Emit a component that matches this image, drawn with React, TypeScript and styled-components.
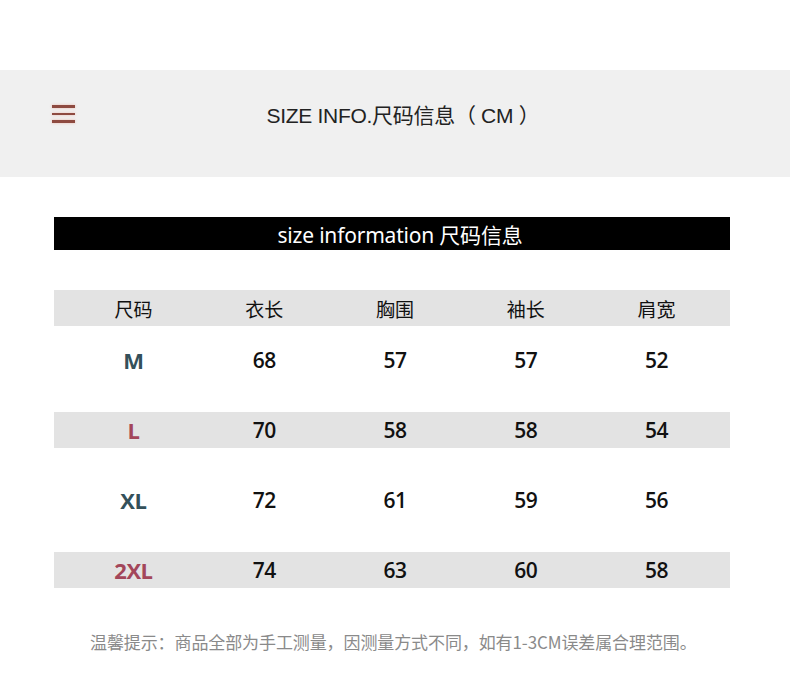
import { FC } from "react";
import styled, { createGlobalStyle } from "styled-components";

type TRow = {
  size: string;
  tone: "teal" | "rose";
  values: number[];
};

const headers = ["尺码", "衣长", "胸围", "袖长", "肩宽"];

const rows: TRow[] = [
  { size: "M", tone: "teal", values: [68, 57, 57, 52] },
  { size: "L", tone: "rose", values: [70, 58, 58, 54] },
  { size: "XL", tone: "teal", values: [72, 61, 59, 56] },
  { size: "2XL", tone: "rose", values: [74, 63, 60, 58] },
];

const App: FC = () => {
  return (
    <>
      <GlobalStyle />
      <Page>
        <TopBar>
          <MenuButton aria-label="menu">
            <span />
            <span />
            <span />
          </MenuButton>
          <h1 className="title">SIZE INFO.尺码信息（ CM ）</h1>
        </TopBar>
        <Content>
          <Banner>size information 尺码信息</Banner>
          <Table>
            <HeadRow>
              {headers.map((h) => (
                <Cell key={h}>{h}</Cell>
              ))}
            </HeadRow>
            {rows.map((row, i) => (
              <DataRow key={row.size} striped={i % 2 === 1}>
                <SizeCell tone={row.tone}>{row.size}</SizeCell>
                {row.values.map((v, j) => (
                  <NumCell key={j}>{v}</NumCell>
                ))}
              </DataRow>
            ))}
          </Table>
          <Note>温馨提示：商品全部为手工测量，因测量方式不同，如有1-3CM误差属合理范围。</Note>
        </Content>
      </Page>
    </>
  );
};

export default App;

const GlobalStyle = createGlobalStyle`
  html, body {
    margin: 0;
    padding: 0;
    background: #ffffff;
  }
  body {
    font-family: "Noto Sans", "Noto Sans CJK SC", sans-serif;
  }
`;

const Page = styled.div`
  width: 790px;
  height: 673px;
  display: flex;
  flex-direction: column;
  padding-top: 70px;
  box-sizing: border-box;
  overflow: hidden;
`;

const TopBar = styled.div`
  position: relative;
  height: 107px;
  background: #f0f0f0;
  display: flex;
  align-items: center;
  justify-content: center;
  padding-bottom: 20px;
  box-sizing: border-box;
  .title {
    margin: 0 0 0 16px;
    font-size: 21px;
    font-weight: 400;
    letter-spacing: -0.3px;
    color: #222222;
    font-family: "Liberation Sans", "Noto Sans CJK SC", sans-serif;
  }
`;

const MenuButton = styled.div`
  position: absolute;
  left: 52px;
  top: 35px;
  width: 23px;
  display: flex;
  flex-direction: column;
  gap: 5px;
  span {
    display: block;
    height: 2.5px;
    background: #8e4a40;
    box-shadow: 0 0 3px rgba(230, 120, 100, 0.45);
  }
`;

const Content = styled.div`
  display: flex;
  flex-direction: column;
  padding: 40px 60px 0 54px;
`;

const Banner = styled.div`
  height: 33px;
  background: #000000;
  color: #ffffff;
  display: flex;
  align-items: center;
  justify-content: center;
  font-size: 21px;
  letter-spacing: -0.2px;
  padding-left: 16px;
  font-family: "Noto Sans", "Noto Sans CJK SC", sans-serif;
`;

const Table = styled.div`
  margin-top: 40px;
  display: flex;
  flex-direction: column;
  gap: 34px;
`;

const RowBase = styled.div`
  display: grid;
  grid-template-columns: repeat(5, 1fr);
  align-items: center;
  height: 36px;
  padding: 0 8px 0 14px;
`;

const HeadRow = styled(RowBase)`
  background: #e3e3e3;
  margin-bottom: -18px;
`;

const DataRow = styled(RowBase)<{ striped: boolean }>`
  background: ${({ striped }) => (striped ? "#e3e3e3" : "transparent")};
`;

const Cell = styled.div`
  text-align: center;
  font-size: 19px;
  color: #111111;
  font-family: "Noto Sans CJK SC", sans-serif;
`;

const NumCell = styled.div`
  text-align: center;
  font-size: 21px;
  font-weight: 600;
  color: #111111;
  font-family: "Open Sans", sans-serif;
  letter-spacing: -0.5px;
`;

const SizeCell = styled.div<{ tone: "teal" | "rose" }>`
  text-align: center;
  font-size: 22px;
  font-weight: 700;
  font-family: "Open Sans", sans-serif;
  letter-spacing: -0.5px;
  color: ${({ tone }) => (tone === "teal" ? "#34505a" : "#a3465a")};
`;

const Note = styled.p`
  margin: 41px 0 0 36px;
  font-size: 17px;
  color: #8a8a8a;
  font-family: "Noto Sans CJK SC", sans-serif;
  letter-spacing: -0.1px;
  white-space: nowrap;
`;
